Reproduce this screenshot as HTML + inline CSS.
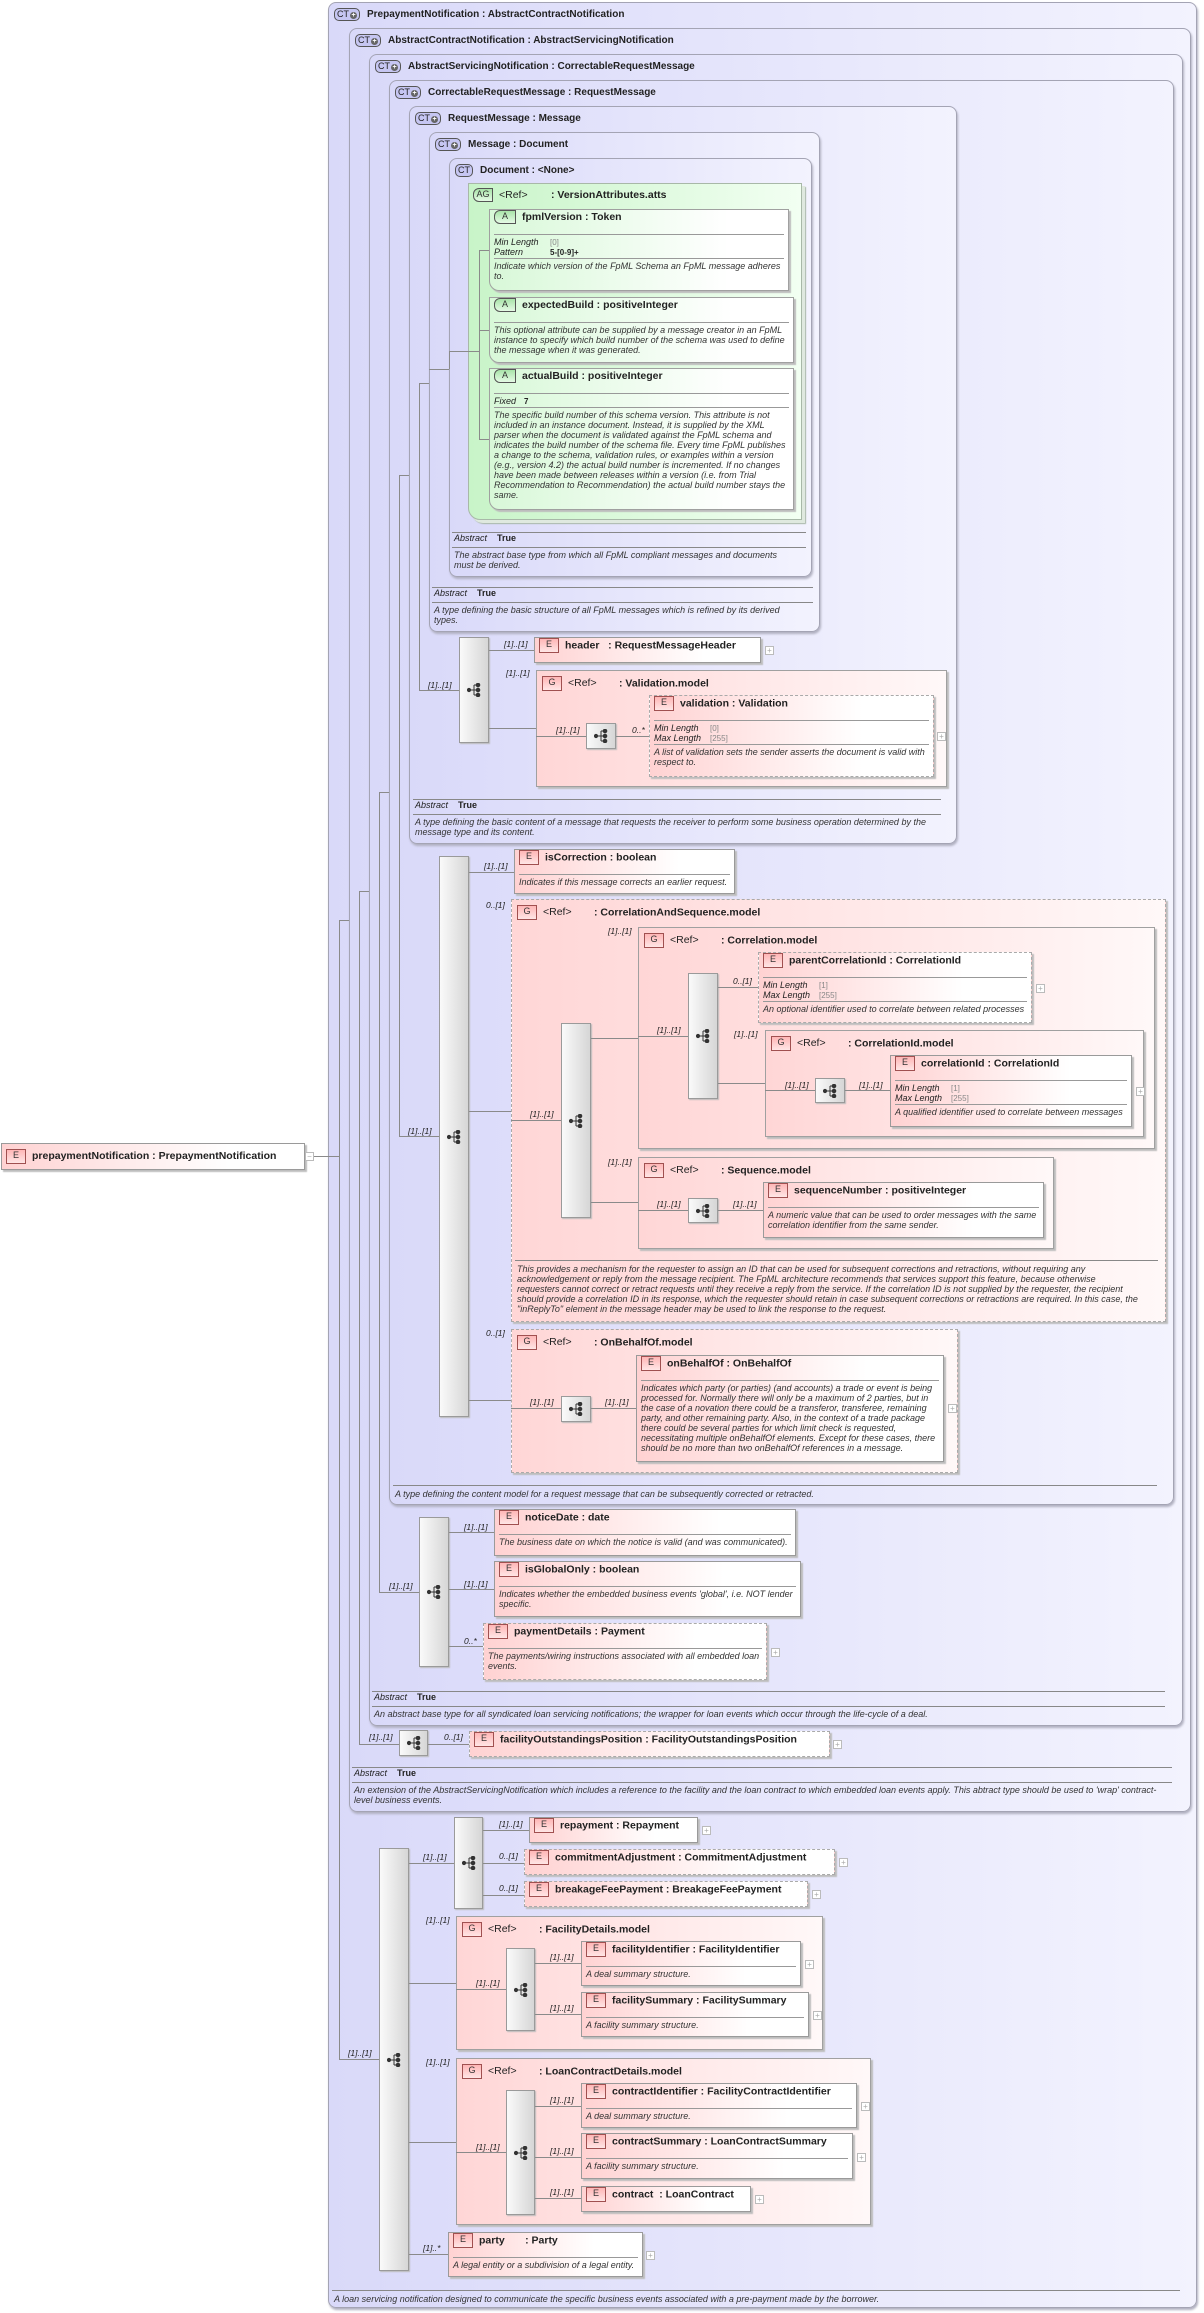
<!DOCTYPE html>
<html><head><meta charset="utf-8">
<style>
*{margin:0;padding:0}
body{width:1204px;height:2313px;position:relative;background:#fff;font-family:"Liberation Sans",sans-serif;color:#222;overflow:hidden}
.ct{position:absolute;border:1px solid #a4a4b4;border-radius:8px;background:linear-gradient(to right,#d9d9f9,#f3f3fe);box-shadow:1px 2px 2px #b0b0c0;box-sizing:border-box}
.ag{position:absolute;border:1px solid #a8b8a8;border-radius:0 0 0 12px;background:linear-gradient(to right,#c8f4c8,#f2fff2);box-shadow:3px 3px 0 #dfe9df,4px 4px 1px #a8b8a8;box-sizing:border-box}
.ctt{position:absolute;left:5px;top:5px;font:bold 10px "Liberation Sans",sans-serif;white-space:nowrap;line-height:14px}
.cti{display:inline-block;height:11px;line-height:11px;border:1px solid #555;border-radius:5px;background:#c6c6f2;font:9px "Liberation Sans",sans-serif;padding:0 2px;margin-right:7px;vertical-align:middle;color:#222}
.cti i{display:inline-block;width:7px;height:7px;border-radius:50%;background:#666;color:#fff;font:bold 7px/7px "Liberation Sans",sans-serif;text-align:center;font-style:normal;margin-left:1px;vertical-align:0}
.el{position:absolute;border:1px solid #9a9a9a;background:linear-gradient(to right,#ffd2d2,#fff 75%);box-shadow:2px 2px 1px #bdbdbd;box-sizing:border-box;overflow:hidden}
.gr{position:absolute;border:1px solid #a0a0a0;background:linear-gradient(to right,#ffd6d6,#fff8f8);box-shadow:2px 2px 1px #bdbdbd;box-sizing:border-box}
.d{border-style:dashed;border-color:#aaa}
.at{position:absolute;border:1px solid #a0a0a0;border-radius:0 0 0 10px;background:linear-gradient(to right,#d8f8d8,#fff 80%);box-shadow:2px 2px 1px #bdbdbd;box-sizing:border-box;overflow:hidden}
.tt{height:24px;line-height:22px;padding-left:4px;font:bold 10.5px "Liberation Sans",sans-serif;color:#222;white-space:nowrap}
.ei{display:inline-block;width:18px;height:13px;line-height:13px;border:1px solid #a05050;background:linear-gradient(#ffb6b6,#ffe6e6);text-align:center;font:normal 9px "Liberation Sans",sans-serif;color:#333;vertical-align:middle;margin-right:6px}
.ai{display:inline-block;width:20px;height:12px;line-height:12px;border:1px solid #555;border-radius:6px 0 0 6px;background:linear-gradient(#a8e4a8,#e4fae4);text-align:center;font:normal 9px "Liberation Sans",sans-serif;color:#333;vertical-align:middle;margin-right:6px}
.sp{border-top:1px solid #999;margin:0 4px}
.ds{padding:2px 4px 0;font:italic 9px/10px "Liberation Sans",sans-serif;color:#333;white-space:nowrap}
.pr{padding:2px 4px 1px;font:italic 9px/10px "Liberation Sans",sans-serif;color:#222;white-space:nowrap}
.pr span{display:inline-block;width:56px}
.pr b{font:normal 8px "Liberation Sans",sans-serif;color:#888}
.pr em{font:bold 8px "Liberation Sans",sans-serif;font-style:normal;color:#222}
.gt{position:absolute;left:5px;top:5px;font:bold 10.5px/14px "Liberation Sans",sans-serif;white-space:nowrap}
.gi{display:inline-block;width:18px;height:13px;line-height:13px;border:1px solid #a05050;background:linear-gradient(#ffb6b6,#ffe6e6);text-align:center;font:normal 9px "Liberation Sans",sans-serif;color:#333;vertical-align:middle;margin-right:6px}
.rf{display:inline-block;width:51px;font-weight:normal}
.sq{position:absolute;border:1px solid #9a9a9a;background:linear-gradient(to right,#fafafa,#d6d6d6);box-shadow:1px 1px 1px #bbb;box-sizing:border-box}
.sq svg{position:absolute;left:50%;top:50%;margin:-7px 0 0 -7px}
.h{position:absolute;height:1px;background:#8a8a8a}
.v{position:absolute;width:1px;background:#8a8a8a}
.lb{position:absolute;font:italic 8.5px/10px "Liberation Sans",sans-serif;color:#222;white-space:nowrap}
.pl{position:absolute;width:7px;height:7px;border:1px solid #bbb;background:#fff;font:8px/7px "Liberation Sans",sans-serif;color:#aaa;text-align:center}
.ft{position:absolute;border-top:1px solid #888}
.ab{height:14px;line-height:14px;border-bottom:1px solid #888;font:9px "Liberation Sans",sans-serif;padding-left:2px}
.ab i{margin-right:10px}
.fd{padding:2px 2px 0;font:italic 9px/10px "Liberation Sans",sans-serif;color:#333;white-space:nowrap}
</style></head><body>

<div class="ct" style="left:328px;top:2px;width:869px;height:2306px"><div class="ctt"><span class="cti">CT<i>+</i></span>PrepaymentNotification : AbstractContractNotification</div></div>
<div class="ct" style="left:349px;top:28px;width:842px;height:1784px"><div class="ctt"><span class="cti">CT<i>+</i></span>AbstractContractNotification : AbstractServicingNotification</div></div>
<div class="ct" style="left:369px;top:54px;width:814px;height:1672px"><div class="ctt"><span class="cti">CT<i>+</i></span>AbstractServicingNotification : CorrectableRequestMessage</div></div>
<div class="ct" style="left:389px;top:80px;width:785px;height:1425px"><div class="ctt"><span class="cti">CT<i>+</i></span>CorrectableRequestMessage : RequestMessage</div></div>
<div class="ct" style="left:409px;top:106px;width:548px;height:738px"><div class="ctt"><span class="cti">CT<i>+</i></span>RequestMessage : Message</div></div>
<div class="ct" style="left:429px;top:132px;width:391px;height:500px"><div class="ctt"><span class="cti">CT<i>+</i></span>Message : Document</div></div>
<div class="ct" style="left:449px;top:158px;width:363px;height:419px"><div class="ctt"><span class="cti">CT</span>Document : &lt;None&gt;</div></div>
<div class="ag" style="left:468px;top:183px;width:334px;height:337px"><div class="gt" style="left:4px;top:4px"><span class="ai" style="width:18px">AG</span><span class="rf" style="width:52px">&lt;Ref&gt;</span>: VersionAttributes.atts</div></div>

<div class="at" style="left:489px;top:209px;width:300px;height:82px"><div class="tt"><span class="ai">A</span>fpmlVersion : Token</div><div class="sp"></div><div class="pr"><span>Min Length</span><b>[0]</b><br><span>Pattern</span><em>5-[0-9]+</em></div><div class="sp"></div><div class="ds">Indicate which version of the FpML Schema an FpML message adheres<br>to.</div></div>
<div class="at d" style="left:489px;top:297px;width:305px;height:66px"><div class="tt"><span class="ai">A</span>expectedBuild : positiveInteger</div><div class="sp"></div><div class="ds">This optional attribute can be supplied by a message creator in an FpML<br>instance to specify which build number of the schema was used to define<br>the message when it was generated.</div></div>
<div class="at d" style="left:489px;top:368px;width:305px;height:142px"><div class="tt"><span class="ai">A</span>actualBuild : positiveInteger</div><div class="sp"></div><div class="pr"><span style="width:30px">Fixed</span><em>7</em></div><div class="sp"></div><div class="ds">The specific build number of this schema version. This attribute is not<br>included in an instance document. Instead, it is supplied by the XML<br>parser when the document is validated against the FpML schema and<br>indicates the build number of the schema file. Every time FpML publishes<br>a change to the schema, validation rules, or examples within a version<br>(e.g., version 4.2) the actual build number is incremented. If no changes<br>have been made between releases within a version (i.e. from Trial<br>Recommendation to Recommendation) the actual build number stays the<br>same.</div></div>

<div class="ft" style="left:452px;top:532px;width:354px"><div class="ab"><i>Abstract</i><b>True</b></div><div class="fd">The abstract base type from which all FpML compliant messages and documents<br>must be derived.</div></div>
<div class="ft" style="left:432px;top:587px;width:381px"><div class="ab"><i>Abstract</i><b>True</b></div><div class="fd">A type defining the basic structure of all FpML messages which is refined by its derived<br>types.</div></div>
<div class="ft" style="left:413px;top:799px;width:528px"><div class="ab"><i>Abstract</i><b>True</b></div><div class="fd">A type defining the basic content of a message that requests the receiver to perform some business operation determined by the<br>message type and its content.</div></div>
<div class="ft" style="left:393px;top:1485px;width:764px"><div class="fd" style="padding-top:3px">A type defining the content model for a request message that can be subsequently corrected or retracted.</div></div>
<div class="ft" style="left:372px;top:1691px;width:793px"><div class="ab"><i>Abstract</i><b>True</b></div><div class="fd">An abstract base type for all syndicated loan servicing notifications; the wrapper for loan events which occur through the life-cycle of a deal.</div></div>
<div class="ft" style="left:352px;top:1767px;width:820px"><div class="ab"><i>Abstract</i><b>True</b></div><div class="fd">An extension of the AbstractServicingNotification which includes a reference to the facility and the loan contract to which embedded loan events apply. This abtract type should be used to 'wrap' contract-<br>level business events.</div></div>
<div class="ft" style="left:332px;top:2290px;width:848px"><div class="fd" style="padding-top:3px">A loan servicing notification designed to communicate the specific business events associated with a pre-payment made by the borrower.</div></div>

<div class="h" style="left:314px;top:1156px;width:25px"></div>
<div class="v" style="left:339px;top:920px;height:1139px"></div>
<div class="h" style="left:339px;top:920px;width:10px"></div>
<div class="h" style="left:339px;top:2059px;width:40px"></div>
<div class="v" style="left:359px;top:891px;height:846px"></div>
<div class="h" style="left:359px;top:891px;width:10px"></div>
<div class="h" style="left:359px;top:1744px;width:40px"></div>
<div class="v" style="left:359px;top:1737px;height:8px"></div>
<div class="v" style="left:379px;top:792px;height:800px"></div>
<div class="h" style="left:379px;top:792px;width:10px"></div>
<div class="h" style="left:379px;top:1592px;width:40px"></div>
<div class="v" style="left:399px;top:475px;height:661px"></div>
<div class="h" style="left:399px;top:475px;width:10px"></div>
<div class="h" style="left:399px;top:1136px;width:40px"></div>
<div class="v" style="left:419px;top:383px;height:307px"></div>
<div class="h" style="left:419px;top:383px;width:10px"></div>
<div class="h" style="left:419px;top:690px;width:40px"></div>
<div class="h" style="left:429px;top:369px;width:20px"></div>
<div class="v" style="left:449px;top:351px;height:18px"></div>
<div class="h" style="left:449px;top:351px;width:30px"></div>
<div class="v" style="left:479px;top:250px;height:189px"></div>
<div class="h" style="left:479px;top:250px;width:10px"></div>
<div class="h" style="left:479px;top:330px;width:10px"></div>
<div class="h" style="left:479px;top:439px;width:10px"></div>

<div class="sq" style="left:459px;top:637px;width:30px;height:106px"><svg width="14" height="14" viewBox="0 0 14 14"><g fill="#333" stroke="#333" stroke-width="1"><circle cx="2" cy="7" r="1.6"/><path d="M2 7H7M7 2V12M7 2H10M7 7H10M7 12H10" fill="none"/><circle cx="11" cy="2" r="1.8"/><circle cx="11" cy="7" r="1.8"/><circle cx="11" cy="12" r="1.8"/></g></svg></div>
<div class="lb" style="left:428px;top:680px">[1]..[1]</div>
<div class="h" style="left:489px;top:650px;width:45px"></div>
<div class="lb" style="left:504px;top:639px">[1]..[1]</div>
<div class="el" style="left:534px;top:637px;width:227px;height:26px"><div class="tt"><span class="ei">E</span>header &nbsp; : RequestMessageHeader</div></div>
<div class="pl" style="left:765px;top:646px">+</div>
<div class="h" style="left:489px;top:728px;width:47px"></div>
<div class="lb" style="left:506px;top:668px">[1]..[1]</div>
<div class="gr" style="left:536px;top:670px;width:411px;height:117px"><div class="gt"><span class="gi">G</span><span class="rf">&lt;Ref&gt;</span>: Validation.model</div></div>
<div class="h" style="left:536px;top:736px;width:50px"></div>
<div class="lb" style="left:556px;top:725px">[1]..[1]</div>
<div class="sq" style="left:586px;top:723px;width:30px;height:26px"><svg width="14" height="14" viewBox="0 0 14 14"><g fill="#333" stroke="#333" stroke-width="1"><circle cx="2" cy="7" r="1.6"/><path d="M2 7H7M7 2V12M7 2H10M7 7H10M7 12H10" fill="none"/><circle cx="11" cy="2" r="1.8"/><circle cx="11" cy="7" r="1.8"/><circle cx="11" cy="12" r="1.8"/></g></svg></div>
<div class="h" style="left:616px;top:736px;width:33px"></div>
<div class="lb" style="left:632px;top:725px">0..*</div>
<div class="el d" style="left:649px;top:695px;width:285px;height:82px"><div class="tt"><span class="ei">E</span>validation : Validation</div><div class="sp"></div><div class="pr"><span>Min Length</span><b>[0]</b><br><span>Max Length</span><b>[255]</b></div><div class="sp"></div><div class="ds">A list of validation sets the sender asserts the document is valid with<br>respect to.</div></div>
<div class="pl" style="left:937px;top:732px">+</div>

<div class="sq" style="left:439px;top:856px;width:30px;height:561px"><svg width="14" height="14" viewBox="0 0 14 14" style="top:280px"><g fill="#333" stroke="#333" stroke-width="1"><circle cx="2" cy="7" r="1.6"/><path d="M2 7H7M7 2V12M7 2H10M7 7H10M7 12H10" fill="none"/><circle cx="11" cy="2" r="1.8"/><circle cx="11" cy="7" r="1.8"/><circle cx="11" cy="12" r="1.8"/></g></svg></div>
<div class="lb" style="left:408px;top:1126px">[1]..[1]</div>
<div class="h" style="left:469px;top:872px;width:45px"></div>
<div class="lb" style="left:484px;top:861px">[1]..[1]</div>
<div class="el" style="left:514px;top:849px;width:221px;height:45px"><div class="tt"><span class="ei">E</span>isCorrection : boolean</div><div class="sp"></div><div class="ds">Indicates if this message corrects an earlier request.</div></div>
<div class="h" style="left:469px;top:1111px;width:42px"></div>
<div class="lb" style="left:486px;top:900px">0..[1]</div>
<div class="gr d" style="left:511px;top:899px;width:655px;height:423px"><div class="gt"><span class="gi">G</span><span class="rf">&lt;Ref&gt;</span>: CorrelationAndSequence.model</div></div>
<div class="sq" style="left:561px;top:1023px;width:30px;height:195px"><svg width="14" height="14" viewBox="0 0 14 14"><g fill="#333" stroke="#333" stroke-width="1"><circle cx="2" cy="7" r="1.6"/><path d="M2 7H7M7 2V12M7 2H10M7 7H10M7 12H10" fill="none"/><circle cx="11" cy="2" r="1.8"/><circle cx="11" cy="7" r="1.8"/><circle cx="11" cy="12" r="1.8"/></g></svg></div>
<div class="h" style="left:511px;top:1120px;width:50px"></div>
<div class="lb" style="left:530px;top:1109px">[1]..[1]</div>
<div class="h" style="left:591px;top:1038px;width:47px"></div>
<div class="h" style="left:591px;top:1202px;width:47px"></div>
<div class="lb" style="left:608px;top:926px">[1]..[1]</div>
<div class="gr" style="left:638px;top:927px;width:517px;height:222px"><div class="gt"><span class="gi">G</span><span class="rf">&lt;Ref&gt;</span>: Correlation.model</div></div>
<div class="sq" style="left:688px;top:973px;width:30px;height:126px"><svg width="14" height="14" viewBox="0 0 14 14"><g fill="#333" stroke="#333" stroke-width="1"><circle cx="2" cy="7" r="1.6"/><path d="M2 7H7M7 2V12M7 2H10M7 7H10M7 12H10" fill="none"/><circle cx="11" cy="2" r="1.8"/><circle cx="11" cy="7" r="1.8"/><circle cx="11" cy="12" r="1.8"/></g></svg></div>
<div class="h" style="left:638px;top:1036px;width:50px"></div>
<div class="lb" style="left:657px;top:1025px">[1]..[1]</div>
<div class="h" style="left:718px;top:987px;width:40px"></div>
<div class="lb" style="left:733px;top:976px">0..[1]</div>
<div class="el d" style="left:758px;top:952px;width:274px;height:71px"><div class="tt"><span class="ei">E</span>parentCorrelationId : CorrelationId</div><div class="sp"></div><div class="pr"><span>Min Length</span><b>[1]</b><br><span>Max Length</span><b>[255]</b></div><div class="sp"></div><div class="ds">An optional identifier used to correlate between related processes</div></div>
<div class="pl" style="left:1036px;top:984px">+</div>
<div class="h" style="left:718px;top:1083px;width:47px"></div>
<div class="lb" style="left:734px;top:1029px">[1]..[1]</div>
<div class="gr" style="left:765px;top:1030px;width:379px;height:107px"><div class="gt"><span class="gi">G</span><span class="rf">&lt;Ref&gt;</span>: CorrelationId.model</div></div>
<div class="h" style="left:765px;top:1090px;width:50px"></div>
<div class="lb" style="left:785px;top:1080px">[1]..[1]</div>
<div class="sq" style="left:815px;top:1078px;width:30px;height:25px"><svg width="14" height="14" viewBox="0 0 14 14"><g fill="#333" stroke="#333" stroke-width="1"><circle cx="2" cy="7" r="1.6"/><path d="M2 7H7M7 2V12M7 2H10M7 7H10M7 12H10" fill="none"/><circle cx="11" cy="2" r="1.8"/><circle cx="11" cy="7" r="1.8"/><circle cx="11" cy="12" r="1.8"/></g></svg></div>
<div class="h" style="left:845px;top:1090px;width:45px"></div>
<div class="lb" style="left:859px;top:1080px">[1]..[1]</div>
<div class="el" style="left:890px;top:1055px;width:242px;height:72px"><div class="tt"><span class="ei">E</span>correlationId : CorrelationId</div><div class="sp"></div><div class="pr"><span>Min Length</span><b>[1]</b><br><span>Max Length</span><b>[255]</b></div><div class="sp"></div><div class="ds">A qualified identifier used to correlate between messages</div></div>
<div class="pl" style="left:1136px;top:1087px">+</div>
<div class="lb" style="left:608px;top:1157px">[1]..[1]</div>
<div class="gr" style="left:638px;top:1157px;width:416px;height:92px"><div class="gt"><span class="gi">G</span><span class="rf">&lt;Ref&gt;</span>: Sequence.model</div></div>
<div class="h" style="left:638px;top:1210px;width:50px"></div>
<div class="lb" style="left:657px;top:1199px">[1]..[1]</div>
<div class="sq" style="left:688px;top:1198px;width:30px;height:25px"><svg width="14" height="14" viewBox="0 0 14 14"><g fill="#333" stroke="#333" stroke-width="1"><circle cx="2" cy="7" r="1.6"/><path d="M2 7H7M7 2V12M7 2H10M7 7H10M7 12H10" fill="none"/><circle cx="11" cy="2" r="1.8"/><circle cx="11" cy="7" r="1.8"/><circle cx="11" cy="12" r="1.8"/></g></svg></div>
<div class="h" style="left:718px;top:1210px;width:45px"></div>
<div class="lb" style="left:733px;top:1199px">[1]..[1]</div>
<div class="el" style="left:763px;top:1182px;width:281px;height:56px"><div class="tt"><span class="ei">E</span>sequenceNumber : positiveInteger</div><div class="sp"></div><div class="ds">A numeric value that can be used to order messages with the same<br>correlation identifier from the same sender.</div></div>
<div class="ft" style="left:515px;top:1260px;width:643px"><div class="fd" style="padding-top:3px">This provides a mechanism for the requester to assign an ID that can be used for subsequent corrections and retractions, without requiring any<br>acknowledgement or reply from the message recipient. The FpML architecture recommends that services support this feature, because otherwise<br>requesters cannot correct or retract requests until they receive a reply from the service. If the correlation ID is not supplied by the requester, the recipient<br>should provide a correlation ID in its response, which the requester should retain in case subsequent corrections or retractions are required. In this case, the<br>"inReplyTo" element in the message header may be used to link the response to the request.</div></div>

<div class="h" style="left:469px;top:1400px;width:42px"></div>
<div class="lb" style="left:486px;top:1328px">0..[1]</div>
<div class="gr d" style="left:511px;top:1329px;width:447px;height:144px"><div class="gt"><span class="gi">G</span><span class="rf">&lt;Ref&gt;</span>: OnBehalfOf.model</div></div>
<div class="h" style="left:511px;top:1408px;width:50px"></div>
<div class="lb" style="left:530px;top:1397px">[1]..[1]</div>
<div class="sq" style="left:561px;top:1396px;width:30px;height:26px"><svg width="14" height="14" viewBox="0 0 14 14"><g fill="#333" stroke="#333" stroke-width="1"><circle cx="2" cy="7" r="1.6"/><path d="M2 7H7M7 2V12M7 2H10M7 7H10M7 12H10" fill="none"/><circle cx="11" cy="2" r="1.8"/><circle cx="11" cy="7" r="1.8"/><circle cx="11" cy="12" r="1.8"/></g></svg></div>
<div class="h" style="left:591px;top:1408px;width:45px"></div>
<div class="lb" style="left:605px;top:1397px">[1]..[1]</div>
<div class="el" style="left:636px;top:1355px;width:308px;height:107px"><div class="tt"><span class="ei">E</span>onBehalfOf : OnBehalfOf</div><div class="sp"></div><div class="ds">Indicates which party (or parties) (and accounts) a trade or event is being<br>processed for. Normally there will only be a maximum of 2 parties, but in<br>the case of a novation there could be a transferor, transferee, remaining<br>party, and other remaining party. Also, in the context of a trade package<br>there could be several parties for which limit check is requested,<br>necessitating multiple onBehalfOf elements. Except for these cases, there<br>should be no more than two onBehalfOf references in a message.</div></div>
<div class="pl" style="left:948px;top:1404px">+</div>

<div class="sq" style="left:419px;top:1517px;width:30px;height:150px"><svg width="14" height="14" viewBox="0 0 14 14"><g fill="#333" stroke="#333" stroke-width="1"><circle cx="2" cy="7" r="1.6"/><path d="M2 7H7M7 2V12M7 2H10M7 7H10M7 12H10" fill="none"/><circle cx="11" cy="2" r="1.8"/><circle cx="11" cy="7" r="1.8"/><circle cx="11" cy="12" r="1.8"/></g></svg></div>
<div class="lb" style="left:389px;top:1581px">[1]..[1]</div>
<div class="h" style="left:449px;top:1532px;width:45px"></div>
<div class="lb" style="left:464px;top:1522px">[1]..[1]</div>
<div class="el" style="left:494px;top:1509px;width:302px;height:47px"><div class="tt"><span class="ei">E</span>noticeDate : date</div><div class="sp"></div><div class="ds">The business date on which the notice is valid (and was communicated).</div></div>
<div class="h" style="left:449px;top:1589px;width:45px"></div>
<div class="lb" style="left:464px;top:1579px">[1]..[1]</div>
<div class="el" style="left:494px;top:1561px;width:307px;height:56px"><div class="tt"><span class="ei">E</span>isGlobalOnly : boolean</div><div class="sp"></div><div class="ds">Indicates whether the embedded business events 'global', i.e. NOT lender<br>specific.</div></div>
<div class="h" style="left:449px;top:1646px;width:34px"></div>
<div class="lb" style="left:464px;top:1636px">0..*</div>
<div class="el d" style="left:483px;top:1623px;width:284px;height:57px"><div class="tt"><span class="ei">E</span>paymentDetails : Payment</div><div class="sp"></div><div class="ds">The payments/wiring instructions associated with all embedded loan<br>events.</div></div>
<div class="pl" style="left:771px;top:1648px">+</div>

<div class="lb" style="left:369px;top:1732px">[1]..[1]</div>
<div class="sq" style="left:399px;top:1730px;width:29px;height:26px"><svg width="14" height="14" viewBox="0 0 14 14"><g fill="#333" stroke="#333" stroke-width="1"><circle cx="2" cy="7" r="1.6"/><path d="M2 7H7M7 2V12M7 2H10M7 7H10M7 12H10" fill="none"/><circle cx="11" cy="2" r="1.8"/><circle cx="11" cy="7" r="1.8"/><circle cx="11" cy="12" r="1.8"/></g></svg></div>
<div class="h" style="left:428px;top:1744px;width:41px"></div>
<div class="lb" style="left:444px;top:1732px">0..[1]</div>
<div class="el d" style="left:469px;top:1731px;width:361px;height:26px"><div class="tt"><span class="ei">E</span>facilityOutstandingsPosition : FacilityOutstandingsPosition</div></div>
<div class="pl" style="left:833px;top:1740px">+</div>

<div class="sq" style="left:379px;top:1848px;width:30px;height:423px"><svg width="14" height="14" viewBox="0 0 14 14"><g fill="#333" stroke="#333" stroke-width="1"><circle cx="2" cy="7" r="1.6"/><path d="M2 7H7M7 2V12M7 2H10M7 7H10M7 12H10" fill="none"/><circle cx="11" cy="2" r="1.8"/><circle cx="11" cy="7" r="1.8"/><circle cx="11" cy="12" r="1.8"/></g></svg></div>
<div class="lb" style="left:348px;top:2048px">[1]..[1]</div>
<div class="h" style="left:409px;top:1863px;width:45px"></div>
<div class="lb" style="left:423px;top:1852px">[1]..[1]</div>
<div class="sq" style="left:454px;top:1817px;width:29px;height:92px"><svg width="14" height="14" viewBox="0 0 14 14"><g fill="#333" stroke="#333" stroke-width="1"><circle cx="2" cy="7" r="1.6"/><path d="M2 7H7M7 2V12M7 2H10M7 7H10M7 12H10" fill="none"/><circle cx="11" cy="2" r="1.8"/><circle cx="11" cy="7" r="1.8"/><circle cx="11" cy="12" r="1.8"/></g></svg></div>
<div class="h" style="left:483px;top:1830px;width:46px"></div>
<div class="lb" style="left:499px;top:1819px">[1]..[1]</div>
<div class="el" style="left:529px;top:1817px;width:169px;height:26px"><div class="tt"><span class="ei">E</span>repayment : Repayment</div></div>
<div class="pl" style="left:702px;top:1826px">+</div>
<div class="h" style="left:483px;top:1863px;width:41px"></div>
<div class="lb" style="left:499px;top:1851px">0..[1]</div>
<div class="el d" style="left:524px;top:1849px;width:311px;height:26px"><div class="tt"><span class="ei">E</span>commitmentAdjustment : CommitmentAdjustment</div></div>
<div class="pl" style="left:839px;top:1858px">+</div>
<div class="h" style="left:483px;top:1895px;width:41px"></div>
<div class="lb" style="left:499px;top:1883px">0..[1]</div>
<div class="el d" style="left:524px;top:1881px;width:284px;height:26px"><div class="tt"><span class="ei">E</span>breakageFeePayment : BreakageFeePayment</div></div>
<div class="pl" style="left:812px;top:1890px">+</div>

<div class="h" style="left:409px;top:1983px;width:47px"></div>
<div class="lb" style="left:426px;top:1915px">[1]..[1]</div>
<div class="gr" style="left:456px;top:1916px;width:367px;height:134px"><div class="gt"><span class="gi">G</span><span class="rf">&lt;Ref&gt;</span>: FacilityDetails.model</div></div>
<div class="sq" style="left:506px;top:1948px;width:29px;height:83px"><svg width="14" height="14" viewBox="0 0 14 14"><g fill="#333" stroke="#333" stroke-width="1"><circle cx="2" cy="7" r="1.6"/><path d="M2 7H7M7 2V12M7 2H10M7 7H10M7 12H10" fill="none"/><circle cx="11" cy="2" r="1.8"/><circle cx="11" cy="7" r="1.8"/><circle cx="11" cy="12" r="1.8"/></g></svg></div>
<div class="h" style="left:456px;top:1989px;width:50px"></div>
<div class="lb" style="left:476px;top:1978px">[1]..[1]</div>
<div class="h" style="left:535px;top:1963px;width:46px"></div>
<div class="lb" style="left:550px;top:1952px">[1]..[1]</div>
<div class="el" style="left:581px;top:1941px;width:220px;height:45px"><div class="tt"><span class="ei">E</span>facilityIdentifier : FacilityIdentifier</div><div class="sp"></div><div class="ds">A deal summary structure.</div></div>
<div class="pl" style="left:805px;top:1960px">+</div>
<div class="h" style="left:535px;top:2014px;width:46px"></div>
<div class="lb" style="left:550px;top:2003px">[1]..[1]</div>
<div class="el" style="left:581px;top:1992px;width:228px;height:45px"><div class="tt"><span class="ei">E</span>facilitySummary : FacilitySummary</div><div class="sp"></div><div class="ds">A facility summary structure.</div></div>
<div class="pl" style="left:813px;top:2011px">+</div>

<div class="h" style="left:409px;top:2142px;width:47px"></div>
<div class="lb" style="left:426px;top:2057px">[1]..[1]</div>
<div class="gr" style="left:456px;top:2058px;width:415px;height:167px"><div class="gt"><span class="gi">G</span><span class="rf">&lt;Ref&gt;</span>: LoanContractDetails.model</div></div>
<div class="sq" style="left:506px;top:2090px;width:29px;height:125px"><svg width="14" height="14" viewBox="0 0 14 14"><g fill="#333" stroke="#333" stroke-width="1"><circle cx="2" cy="7" r="1.6"/><path d="M2 7H7M7 2V12M7 2H10M7 7H10M7 12H10" fill="none"/><circle cx="11" cy="2" r="1.8"/><circle cx="11" cy="7" r="1.8"/><circle cx="11" cy="12" r="1.8"/></g></svg></div>
<div class="h" style="left:456px;top:2152px;width:50px"></div>
<div class="lb" style="left:476px;top:2142px">[1]..[1]</div>
<div class="h" style="left:535px;top:2106px;width:46px"></div>
<div class="lb" style="left:550px;top:2095px">[1]..[1]</div>
<div class="el" style="left:581px;top:2083px;width:276px;height:45px"><div class="tt"><span class="ei">E</span>contractIdentifier : FacilityContractIdentifier</div><div class="sp"></div><div class="ds">A deal summary structure.</div></div>
<div class="pl" style="left:861px;top:2102px">+</div>
<div class="h" style="left:535px;top:2157px;width:46px"></div>
<div class="lb" style="left:550px;top:2146px">[1]..[1]</div>
<div class="el" style="left:581px;top:2133px;width:272px;height:46px"><div class="tt"><span class="ei">E</span>contractSummary : LoanContractSummary</div><div class="sp"></div><div class="ds">A facility summary structure.</div></div>
<div class="pl" style="left:857px;top:2153px">+</div>
<div class="h" style="left:535px;top:2198px;width:46px"></div>
<div class="lb" style="left:550px;top:2187px">[1]..[1]</div>
<div class="el" style="left:581px;top:2186px;width:170px;height:26px"><div class="tt"><span class="ei">E</span>contract &nbsp;: LoanContract</div></div>
<div class="pl" style="left:755px;top:2195px">+</div>

<div class="h" style="left:409px;top:2254px;width:39px"></div>
<div class="lb" style="left:423px;top:2243px">[1]..*</div>
<div class="el" style="left:448px;top:2232px;width:195px;height:45px"><div class="tt"><span class="ei">E</span>party &nbsp; &nbsp; &nbsp; : Party</div><div class="sp"></div><div class="ds">A legal entity or a subdivision of a legal entity.</div></div>
<div class="pl" style="left:646px;top:2251px">+</div>

<div class="el" style="left:1px;top:1143px;width:304px;height:27px"><div class="tt" style="line-height:25px"><span class="ei">E</span>prepaymentNotification : PrepaymentNotification</div></div>
<div class="pl" style="left:305px;top:1152px">&minus;</div>

</body></html>
